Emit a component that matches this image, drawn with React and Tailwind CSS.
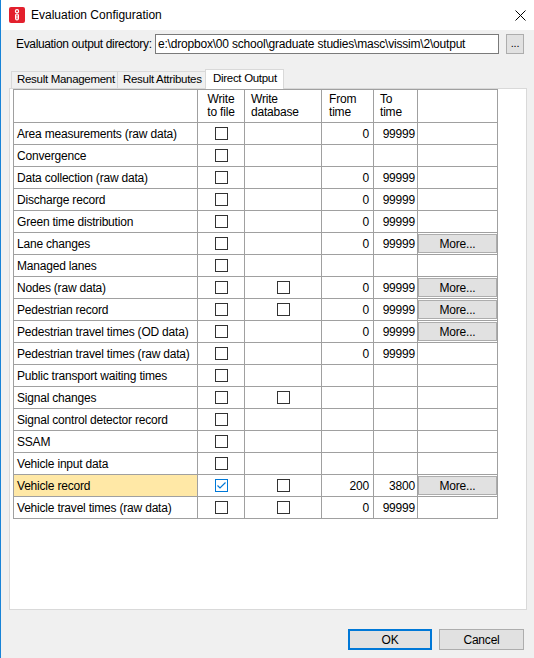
import React from "react";

const rows = [
  { name: "Area measurements (raw data)", file: true, db: false, from: "0", to: "99999" },
  { name: "Convergence", file: true },
  { name: "Data collection (raw data)", file: true, from: "0", to: "99999" },
  { name: "Discharge record", file: true, from: "0", to: "99999" },
  { name: "Green time distribution", file: true, from: "0", to: "99999" },
  { name: "Lane changes", file: true, from: "0", to: "99999", more: true },
  { name: "Managed lanes", file: true },
  { name: "Nodes (raw data)", file: true, db: true, from: "0", to: "99999", more: true },
  { name: "Pedestrian record", file: true, db: true, from: "0", to: "99999", more: true },
  { name: "Pedestrian travel times (OD data)", file: true, from: "0", to: "99999", more: true },
  { name: "Pedestrian travel times (raw data)", file: true, from: "0", to: "99999" },
  { name: "Public transport waiting times", file: true },
  { name: "Signal changes", file: true, db: true },
  { name: "Signal control detector record", file: true },
  { name: "SSAM", file: true },
  { name: "Vehicle input data", file: true },
  { name: "Vehicle record", file: true, checked: true, db: true, from: "200", to: "3800", more: true, hl: true },
  { name: "Vehicle travel times (raw data)", file: true, db: true, from: "0", to: "99999" },
];

function Box({ checked }) {
  if (checked) {
    return (
      <span className="inline-block w-[13px] h-[13px] border border-[#0078d7] bg-white align-middle">
        <svg width="11" height="11" viewBox="0 0 11 11" className="block">
          <polyline points="1.5,5.5 4,8 9.5,2.5" fill="none" stroke="#0078d7" strokeWidth="1.2" />
        </svg>
      </span>
    );
  }
  return <span className="inline-block w-[13px] h-[13px] border border-[#333333] bg-white align-middle" />;
}

const cell = "border border-[#a0a0a0] p-0";

export default function App() {
  return (
    <div
      className="w-[534px] h-[658px] bg-[#f0f0f0] border-l border-[#1883d7] flex flex-col text-[12px] text-black overflow-hidden tracking-[-0.2px]"
      style={{ fontFamily: '"Liberation Sans", Arial, sans-serif' }}
    >
      {/* Title bar */}
      <div className="h-[30px] bg-white flex items-center pl-[8px] pr-[8px] shrink-0">
        <svg width="16" height="16" viewBox="0 0 16 16" className="shrink-0">
          <rect x="0" y="0" width="16" height="16" rx="2" fill="#e3202d" />
          <circle cx="8" cy="4.2" r="1.6" fill="none" stroke="#fff" strokeWidth="1.2" />
          <rect x="6.6" y="7" width="2.8" height="6" rx="1.4" fill="none" stroke="#fff" strokeWidth="1.2" />
          <line x1="8" y1="8.5" x2="8" y2="11.5" stroke="#fff" strokeWidth="1" />
        </svg>
        <span className="ml-[6px] text-[12px] leading-none tracking-normal">Evaluation Configuration</span>
        <div className="flex-1" />
        <svg width="11" height="11" viewBox="0 0 11 11">
          <line x1="0.5" y1="0.5" x2="10.5" y2="10.5" stroke="#000" strokeWidth="1" />
          <line x1="10.5" y1="0.5" x2="0.5" y2="10.5" stroke="#000" strokeWidth="1" />
        </svg>
      </div>

      {/* Directory row */}
      <div className="mt-[4px] h-[20px] flex items-center pl-[15px] shrink-0">
        <span className="w-[139px] whitespace-nowrap tracking-[-0.35px]">Evaluation output directory:</span>
        <div className="w-[344px] h-[20px] border border-[#7a7a7a] bg-white flex items-center pl-[2px] whitespace-nowrap overflow-hidden">
          e:\dropbox\00 school\graduate studies\masc\vissim\2\output
        </div>
        <div className="ml-[7px] w-[18px] h-[20px] border border-[#adadad] bg-[#e1e1e1] flex items-center justify-center text-[11px] leading-none pb-[1px]">
          ...
        </div>
      </div>

      {/* Tabs */}
      <div className="mt-[15px] h-[20px] -mb-px flex items-end pl-[10px] relative z-10 shrink-0 text-[11.5px] tracking-[-0.3px]">
        <div className="w-[107px] h-[18px] border border-[#d9d9d9] bg-[#f0f0f0] flex items-center pl-[5px] whitespace-nowrap overflow-hidden">
          Result Management
        </div>
        <div className="w-[87px] h-[18px] border-t border-b border-[#d9d9d9] bg-[#f0f0f0] flex items-center pl-[5px] whitespace-nowrap overflow-hidden">
          Result Attributes
        </div>
        <div className="w-[79px] h-[20px] border-t border-l border-r border-[#d9d9d9] bg-white flex items-center pl-[7px] pb-[1px] whitespace-nowrap">
          Direct Output
        </div>
      </div>

      {/* Panel */}
      <div className="ml-[8px] w-[518px] h-[522px] border border-[#d9d9d9] bg-white pl-[3px] shrink-0">
        <table className="border-collapse table-fixed w-[484px]">
          <colgroup>
            <col className="w-[184px]" />
            <col className="w-[47px]" />
            <col className="w-[77px]" />
            <col className="w-[52px]" />
            <col className="w-[44px]" />
            <col className="w-[80px]" />
          </colgroup>
          <thead>
            <tr className="h-[33px]">
              <th className={cell}></th>
              <th className={`${cell} font-normal text-center leading-[13px] align-middle`}>
                Write<br />to file
              </th>
              <th className={`${cell} font-normal text-left leading-[13px] align-middle pl-[6px]`}>
                Write<br />database
              </th>
              <th className={`${cell} font-normal text-left leading-[13px] align-middle pl-[7px]`}>
                From<br />time
              </th>
              <th className={`${cell} font-normal text-left leading-[13px] align-middle pl-[6px]`}>
                To<br />time
              </th>
              <th className={cell}></th>
            </tr>
          </thead>
          <tbody>
            {rows.map((r) => (
              <tr key={r.name} className="h-[22px]">
                <td className={`${cell} pl-[3px] whitespace-nowrap overflow-hidden ${r.hl ? "bg-[#ffe8a6]" : ""}`}>
                  {r.name}
                </td>
                <td className={`${cell} text-center leading-none`}>{r.file && <Box checked={r.checked} />}</td>
                <td className={`${cell} text-center leading-none`}>{r.db && <Box />}</td>
                <td className={`${cell} text-right pr-[4px]`}>{r.from}</td>
                <td className={`${cell} text-right pr-[2px]`}>{r.to}</td>
                <td className={`${cell} px-0 py-0`}>
                  {r.more && (
                    <div className="h-[19px] border border-[#adadad] bg-[#e1e1e1] flex items-center justify-center">
                      More...
                    </div>
                  )}
                </td>
              </tr>
            ))}
          </tbody>
        </table>
      </div>

      {/* Buttons */}
      <div className="mt-[19px] flex justify-end gap-[7px] pr-[10px] shrink-0">
        <div className="w-[84px] h-[21px] border-2 border-[#0078d7] bg-[#e1e1e1] flex items-center justify-center">
          OK
        </div>
        <div className="w-[85px] h-[21px] border border-[#adadad] bg-[#e1e1e1] flex items-center justify-center">
          Cancel
        </div>
      </div>
    </div>
  );
}
